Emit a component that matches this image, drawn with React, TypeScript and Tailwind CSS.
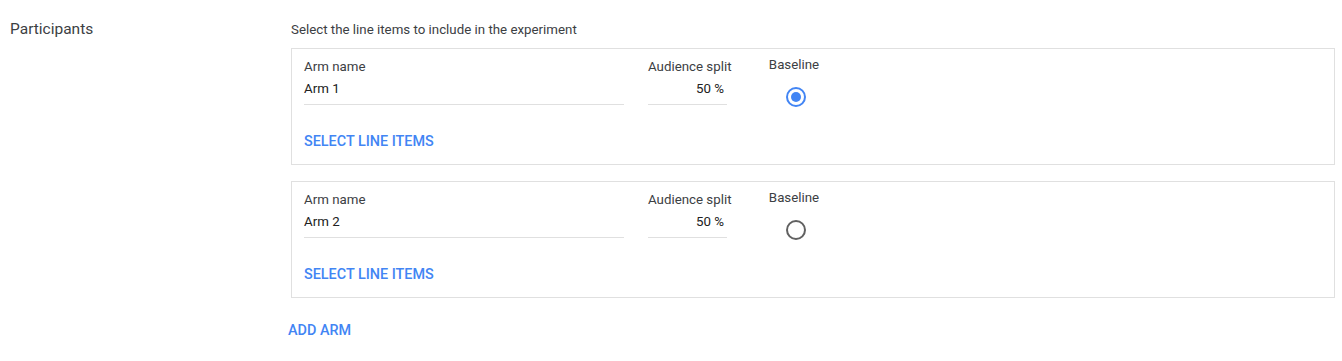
import React from "react";

type Arm = { name: string; split: number; baseline: boolean };

const arms: Arm[] = [
  { name: "Arm 1", split: 50, baseline: true },
  { name: "Arm 2", split: 50, baseline: false },
];

function Radio({ checked }: { checked: boolean }) {
  return (
    <span
      className={
        checked
          ? "flex h-[20px] w-[20px] items-center justify-center rounded-full border-2 border-[#4285f4]"
          : "flex h-[20px] w-[20px] items-center justify-center rounded-full border-2 border-[#616161]"
      }
    >
      {checked && <span className="h-[10px] w-[10px] rounded-full bg-[#4285f4]" />}
    </span>
  );
}

function ArmCard({ arm }: { arm: Arm }) {
  return (
    <div className="border border-[#e0e0e0] pl-[12px] pt-[10px] pb-[14px]">
      <div className="flex">
        {/* arm name */}
        <div className="w-[320px]">
          <div className="h-[16px] text-[13.3px] leading-[16px] text-[#3c4043]">Arm name</div>
          <div className="mt-[4px] h-[26px] border-b border-[#e0e0e0] pt-[2px] text-[13.3px] leading-[16px] text-[#212121]">
            {arm.name}
          </div>
        </div>

        {/* audience split */}
        <div className="ml-[24px] w-[79px]">
          <div className="h-[16px] whitespace-nowrap text-[13.3px] leading-[16px] text-[#3c4043]">Audience split</div>
          <div className="mt-[4px] h-[26px] border-b border-[#e0e0e0] pr-[3px] pt-[2px] text-right text-[13.3px] leading-[16px] text-[#212121]">
            {arm.split} %
          </div>
        </div>

        {/* baseline */}
        <div className="ml-[41px] flex w-[52px] flex-col items-center">
          <div className="-mt-[2px] h-[16px] text-[13.3px] leading-[16px] text-[#3c4043]">Baseline</div>
          <div className="mt-[14px] ml-[4px]">
            <Radio checked={arm.baseline} />
          </div>
        </div>
      </div>

      <button className="mt-[27px] block text-[14.4px] font-medium leading-[16px] text-[#4285f4]">
        SELECT LINE ITEMS
      </button>
    </div>
  );
}

export default function App() {
  return (
    <div
      className="min-h-[361px] bg-white pl-[10px] pr-[7px] pt-[20px]"
      style={{ fontFamily: "Roboto, 'Liberation Sans', sans-serif" }}
    >
      <div className="flex">
        <div className="w-[281px] text-[15.5px] leading-[18px] text-[#3c4043]">Participants</div>

        <div className="flex-1">
          <div className="pt-[1px] text-[13.3px] leading-[18px] text-[#3c4043]">
            Select the line items to include in the experiment
          </div>

          <div className="mt-[9px] flex flex-col gap-[16px]">
            {arms.map((a) => (
              <ArmCard key={a.name} arm={a} />
            ))}
          </div>

          <button className="-ml-[3px] mt-[25px] block text-[14.4px] font-medium leading-[16px] text-[#4285f4]">
            ADD ARM
          </button>
        </div>
      </div>
    </div>
  );
}
